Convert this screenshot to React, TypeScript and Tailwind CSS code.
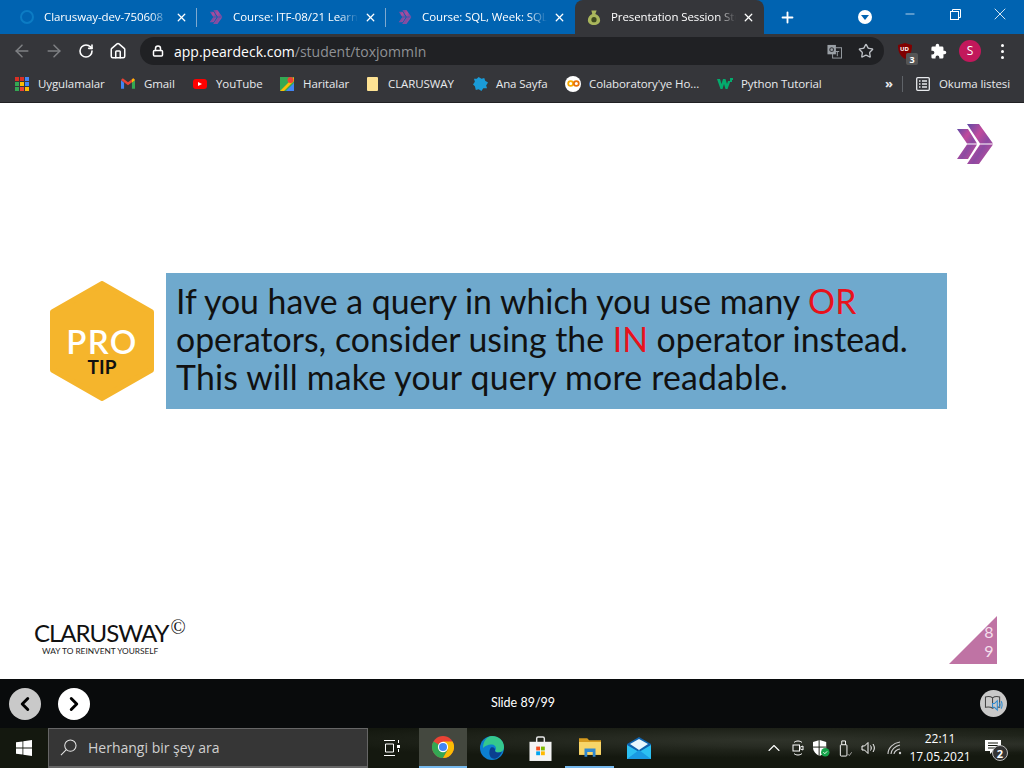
import { ArrowLeft, ArrowRight, ChevronLeft, ChevronRight, ChevronUp, House, Lock, Minus, Plus, RotateCw, Star, X } from 'lucide-react';

const uiFont = "font-['Open_Sans','Noto_Sans',sans-serif]";

function ChevronMark({ className }: { className?: string }) {
  return (
    <svg viewBox="0 0 36 40" className={className}>
      <defs>
        <linearGradient id="chev" x1="0" y1="0" x2="1" y2="1">
          <stop offset="0" stopColor="#5f4aa6" />
          <stop offset="0.35" stopColor="#c04a9c" />
          <stop offset="0.6" stopColor="#8c4aa2" />
          <stop offset="1" stopColor="#d24f97" />
        </linearGradient>
      </defs>
      <path d="M0 5h11l9 14.500H10z M10 20.500h10L11 35H0z" fill="url(#chev)" />
      <path d="M10 0h12l14 19.500H23z M23 20.500h13L22 40H10z" fill="url(#chev)" />
    </svg>
  );
}

function Tab({ title, icon, active, sep }: { title: string; icon: React.ReactNode; active?: boolean; sep?: boolean }) {
  return (
    <div className={`relative flex h-[34px] w-[189px] items-center pl-[11px] ${active ? 'rounded-t-lg bg-[#35363a]' : ''}`}>
      <div className="flex w-[16px] justify-center">{icon}</div>
      <span className="ml-[9px] w-[125px] overflow-hidden whitespace-nowrap text-[11.5px] tracking-[-0.1px] text-white [mask-image:linear-gradient(to_right,black_85%,transparent)]">
        {title}
      </span>
      <X size={13} strokeWidth={2.400} className="ml-[6px] text-white" />
      {sep && <div className="absolute right-0 top-[8px] h-[19px] w-px bg-[#7fa9cf]" />}
    </div>
  );
}

function Bookmark({ icon, label, left, width }: { icon: React.ReactNode; label: string; left: number; width: number }) {
  return (
    <div className="flex shrink-0 items-center" style={{ marginLeft: left }}>
      <div className="flex w-[16px] justify-center">{icon}</div>
      <span className="ml-[8px] whitespace-nowrap text-[11.5px] tracking-[-0.1px] text-[#e8eaed]" style={{ width }}>
        {label}
      </span>
    </div>
  );
}

function AppsIcon() {
  const colors = ['#d93025', '#d93025', '#4285f4', '#34a853', '#fbbc04', '#4285f4', '#34a853', '#ea4335', '#fbbc04'];
  return (
    <div className="grid h-[14px] w-[14px] grid-cols-3 gap-px">
      {colors.map((c, i) => (
        <div key={i} style={{ backgroundColor: c }} />
      ))}
    </div>
  );
}

function ChromeLogo() {
  return (
    <svg viewBox="0 0 24 24" className="h-[22px] w-[22px]">
      <circle cx="12" cy="12" r="12" fill="#ea4335" />
      <path d="M12 12 1.600 6A12 12 0 0 0 12 24l5.200-9z" fill="#34a853" />
      <path d="M12 6h10.400A12 12 0 0 1 12 24l5.200-9z" fill="#fbbc04" />
      <circle cx="12" cy="12" r="5.600" fill="#fff" />
      <circle cx="12" cy="12" r="4.400" fill="#4285f4" />
    </svg>
  );
}

function EdgeLogo() {
  return (
    <svg viewBox="0 0 24 24" className="h-[24px] w-[24px]">
      <circle cx="12" cy="12" r="12" fill="#0c7fd0" />
      <path d="M12 0c6.500 0 12 4.500 12 11 0 3.500-2.500 5.500-5.500 5.500-2 0-3.500-.7-3.500-1.500 2-2 1-6-3-6.500-3-.4-6.500 1-9 3.500C3 5 7 0 12 0z" fill="#35c88d" />
      <path d="M11 11.500c2.500-1 4.500.8 4 3.500.5 1 2 1.500 3.500 1.500 1.200 0 2.500-.3 3.500-1-1 2.500-3 5.500-6 7-2.500.8-5 0-6-2.500-1.200-3-.5-7 1-8.500z" fill="#0b3f8f" />
    </svg>
  );
}

function StoreLogo() {
  return (
    <svg viewBox="0 0 24 26" className="h-[25px] w-[23px]">
      <path d="M8 7V2.500A1.500 1.500 0 0 1 9.500 1h5A1.500 1.500 0 0 1 16 2.500V7" fill="none" stroke="#e8e8e8" strokeWidth="1.500" />
      <rect x="0.500" y="6" width="23" height="20" fill="#f4f4f4" />
      <rect x="7.500" y="11" width="4" height="4" fill="#f25022" />
      <rect x="12.500" y="11" width="4" height="4" fill="#7fba00" />
      <rect x="7.500" y="16" width="4" height="4" fill="#00a4ef" />
      <rect x="12.500" y="16" width="4" height="4" fill="#ffb900" />
    </svg>
  );
}

function ExplorerLogo() {
  return (
    <svg viewBox="0 0 24 20" className="h-[19px] w-[22px]">
      <path d="M0 0h9l2 2h13v16H0z" fill="#d69a1e" />
      <path d="M0 4h24v14H0z" fill="#f8d568" />
      <path d="M6 11h12v9h-3v-5H9v5H6z" fill="#2f88d0" />
    </svg>
  );
}

function MailLogo() {
  return (
    <svg viewBox="0 0 24 22" className="h-[22px] w-[24px]">
      <path d="M0 7 12 0l12 7v15H0z" fill="#0f62ad" />
      <path d="M0 8 12 15 24 8v14H0z" fill="#2cc0f2" />
      <path d="M0 22 12 13l12 9z" fill="#1a9ae2" />
      <path d="M3 7 12 2l9 5-9 6z" fill="#e8f6fd" />
    </svg>
  );
}

export default function App() {
  return (
    <div className={`flex h-[768px] w-[1024px] flex-col overflow-hidden bg-white ${uiFont}`}>
      {/* title bar */}
      <div className="flex h-[34px] shrink-0 items-start bg-[#0063b1] pl-[8px]">
        <Tab
          title="Clarusway-dev-750608"
          sep
          icon={<div className="h-[14px] w-[14px] rounded-full border-[2.500px] border-[#0c7cc4]" />}
        />
        <Tab title="Course: ITF-08/21 Learn" sep icon={<ChevronMark className="h-[14px] w-[14px] opacity-90" />} />
        <Tab title="Course: SQL, Week: SQL" icon={<ChevronMark className="h-[14px] w-[14px] opacity-90" />} />
        <Tab
          title="Presentation Session Stu"
          active
          icon={
            <svg viewBox="0 0 16 18" className="h-[17px] w-[14px]">
              <path d="M5 1h6L9.500 5c3.500 1 5.500 4 5.500 7 0 3.500-3 5.500-7 5.500S1 15.500 1 12c0-3 2-6 5-7z" fill="#a9b65c" />
              <circle cx="8" cy="11.500" r="3" fill="#3f4a1f" />
            </svg>
          }
        />
        <Plus size={17} strokeWidth={2.600} className="ml-[15px] mt-[9px] text-white" />
        <div className="ml-[62px] mt-[10px] flex h-[14px] w-[14px] items-center justify-center rounded-full bg-white">
          <div className="h-0 w-0 border-x-[4px] border-t-[5px] border-x-transparent border-t-[#0063b1]" />
        </div>
        <Minus size={14} strokeWidth={1.200} className="ml-[31px] mt-[7px] text-white" />
        <svg viewBox="0 0 11 11" className="ml-[33px] mt-[9px] h-[11px] w-[11px]" fill="none" stroke="#fff">
          <rect x="0.500" y="2.500" width="8" height="8" />
          <path d="M2.500 2.500v-2h8v8h-2" />
        </svg>
        <X size={20} strokeWidth={1} className="ml-[29px] mt-[4px] text-white" />
      </div>

      {/* toolbar */}
      <div className="flex h-[34px] shrink-0 items-center bg-[#35363a]">
        <ArrowLeft size={20} strokeWidth={1.800} className="ml-[12px] text-[#7f8184]" />
        <ArrowRight size={20} strokeWidth={1.800} className="ml-[12px] text-[#7f8184]" />
        <RotateCw size={16} strokeWidth={2.400} className="ml-[14px] text-white" />
        <House size={18} strokeWidth={2} className="ml-[15px] text-white" />
        <div className="ml-[13px] flex h-[28px] w-[744px] items-center rounded-full bg-[#202124]">
          <Lock size={12} strokeWidth={3} className="ml-[12px] text-white" />
          <span className="ml-[10px] text-[14px] text-white">
            app.peardeck.com<span className="text-[#8f9195]">/student/toxjommIn</span>
          </span>
          <svg viewBox="0 0 16 16" className="ml-auto mr-[16px] h-[15px] w-[15px]">
            <rect x="0.500" y="1" width="9" height="10" fill="#9aa0a6" />
            <rect x="6" y="4" width="9.500" height="11" fill="none" stroke="#9aa0a6" />
            <circle cx="5" cy="6" r="2" fill="none" stroke="#35363a" strokeWidth="1.200" />
            <path d="M9 8h4M11 8v5" stroke="#9aa0a6" />
          </svg>
          <Star size={16} strokeWidth={2} className="mr-[10px] text-[#bdc1c6]" />
        </div>
        <div className="relative ml-[13px] h-[16px] w-[16px]">
          <svg viewBox="0 0 16 16" className="h-[16px] w-[16px]">
            <path d="M1 2 8 0l7 2c0 7-2 11-7 14C3 13 1 9 1 2z" fill="#800000" />
          </svg>
          <span className="absolute left-[3px] top-[2px] text-[6px] font-bold leading-[9px] text-white">UD</span>
          <span className="absolute left-[9px] top-[10px] flex h-[12px] w-[12px] items-center justify-center rounded-[2px] bg-[#555] text-[9px] font-bold leading-none text-white">3</span>
        </div>
        <svg viewBox="0 0 24 24" className="ml-[17px] h-[17px] w-[17px]" fill="#fff">
          <path d="M20.500 11H19V7a2 2 0 0 0-2-2h-4V3.500a2.500 2.500 0 0 0-5 0V5H4a2 2 0 0 0-2 2v3.800h1.500a2.700 2.700 0 0 1 0 5.400H2V20a2 2 0 0 0 2 2h3.800v-1.500a2.700 2.700 0 0 1 5.400 0V22H17a2 2 0 0 0 2-2v-4h1.500a2.500 2.500 0 0 0 0-5z" />
        </svg>
        <div className="ml-[12px] flex h-[22px] w-[22px] items-center justify-center rounded-full bg-[#c2185b] text-[12px] text-white">S</div>
        <div className="ml-[20px] flex flex-col gap-[3px]">
          <div className="h-[3px] w-[3px] rounded-full bg-white" />
          <div className="h-[3px] w-[3px] rounded-full bg-white" />
          <div className="h-[3px] w-[3px] rounded-full bg-white" />
        </div>
      </div>

      {/* bookmarks */}
      <div className="flex h-[35px] shrink-0 items-center border-b border-[#202124] bg-[#35363a] pb-[3px]">
        <Bookmark left={14} width={67} label="Uygulamalar" icon={<AppsIcon />} />
        <Bookmark
          left={15}
          width={31}
          label="Gmail"
          icon={
            <svg viewBox="0 0 16 12" className="h-[11px] w-[14px]">
              <path d="M0 2v10h3.500V5z" fill="#4285f4" />
              <path d="M16 2v10h-3.500V5z" fill="#34a853" />
              <path d="M0 2l8 6 8-6-2-2-6 4.500L2 0z" fill="#ea4335" />
              <path d="M14 0l2 2-3.500 3V1.500z" fill="#fbbc04" />
            </svg>
          }
        />
        <Bookmark
          left={17}
          width={47}
          label="YouTube"
          icon={
            <div className="flex h-[10px] w-[14px] items-center justify-center rounded-[3px] bg-[#f00]">
              <div className="h-0 w-0 border-y-[2.500px] border-l-[4px] border-y-transparent border-l-white" />
            </div>
          }
        />
        <Bookmark
          left={16}
          width={45}
          label="Haritalar"
          icon={
            <svg viewBox="0 0 14 14" className="h-[14px] w-[14px]">
              <rect width="14" height="14" fill="#34a853" />
              <path d="M0 14 14 0v4L4 14z" fill="#fbbc04" />
              <path d="M6 14l8-8v8z" fill="#4285f4" />
              <circle cx="10.500" cy="3" r="3" fill="#ea4335" />
            </svg>
          }
        />
        <Bookmark
          left={16}
          width={68}
          label="CLARUSWAY"
          icon={<div className="h-[14px] w-[11px] rounded-[1px] bg-[#fde293]" />}
        />
        <Bookmark
          left={16}
          width={53}
          label="Ana Sayfa"
          icon={
            <svg viewBox="0 0 16 16" className="h-[15px] w-[15px]" fill="#1a9bd7">
              <path d="M6 1l3 2 3-1 1 3 3 2-2 3 1 3-4 0-2 3-3-2-3 1-1-4-2-2 2-3-1-3 3 0z" />
            </svg>
          }
        />
        <Bookmark
          left={16}
          width={111}
          label="Colaboratory'ye Ho..."
          icon={
            <div className="flex h-[16px] w-[16px] items-center justify-center rounded-full bg-white">
              <svg viewBox="0 0 16 10" className="h-[9px] w-[13px]" fill="none" stroke="#f9ab00" strokeWidth="2.200">
                <circle cx="4.500" cy="5" r="3" />
                <circle cx="11.500" cy="5" r="3" stroke="#e8710a" />
              </svg>
            </div>
          }
        />
        <Bookmark
          left={17}
          width={82}
          label="Python Tutorial"
          icon={
            <svg viewBox="0 0 16 11" className="h-[11px] w-[16px]" fill="#04aa6d">
              <path d="M0 1h3l1.500 5L6 1h2.500l1.500 5 1-3h2.500L10.500 11H8.500L7 6l-1.500 5H3.500z" />
              <path d="M13 0h3v2h-1v2h-2z" />
            </svg>
          }
        />
        <span className="ml-[62px] text-[13px] font-bold leading-none text-[#e8eaed]">»</span>
        <div className="ml-[9px] h-[16px] w-px bg-[#5f6368]" />
        <svg viewBox="0 0 14 14" className="ml-[13px] h-[14px] w-[14px]" fill="none" stroke="#e8eaed" strokeWidth="1.300">
          <rect x="0.700" y="0.700" width="12.600" height="12.600" rx="1" />
          <path d="M3 4h1.500M6 4h5M3 7h1.500M6 7h5M3 10h1.500M6 10h5" />
        </svg>
        <span className="ml-[9px] whitespace-nowrap text-[11.5px] tracking-[-0.1px] text-[#e8eaed]">Okuma listesi</span>
      </div>

      {/* slide */}
      <div className="flex h-[576px] shrink-0 flex-col bg-white">
        <div className="flex justify-end pr-[31px] pt-[21px]">
          <ChevronMark className="h-[40px] w-[36px]" />
        </div>
        <div className="ml-[49px] mt-[109px] flex items-center">
          <div className="relative h-[120px] w-[106px]">
            <svg viewBox="0 0 106 120" className="h-[120px] w-[106px]">
              <path
                d="M53 3 102 31v58L53 117 4 89V31z"
                fill="#f5b52c"
                stroke="#f5b52c"
                strokeWidth="6"
                strokeLinejoin="round"
              />
            </svg>
            <div className="absolute inset-0 flex flex-col items-center pt-[45px] font-['Lato',sans-serif]">
              <span className="text-[33px] font-semibold leading-[30px] tracking-[1.300px] text-white">PRO</span>
              <span className="mt-[3px] text-[19px] font-bold leading-[16px] text-[#111]">TIP</span>
            </div>
          </div>
          <div className="ml-[11px] h-[136px] w-[781px] bg-[#6fa9cd] pl-[10px] pt-[9px] font-['Lato',sans-serif] text-[33.8px] leading-[38px] text-[#111]">
            <p className="whitespace-nowrap">
              If you have a query in which you use many <span className="text-[#e8121c]">OR</span>
            </p>
            <p className="whitespace-nowrap">
              operators, consider using the <span className="text-[#e8121c]">IN</span> operator instead.
            </p>
            <p className="whitespace-nowrap tracking-[0.22px]">This will make your query more readable.</p>
          </div>
        </div>
        <div className="mt-auto flex items-end justify-between pb-[15px] pl-[34px] pr-[27px]">
          <div className="mb-[8px] font-['Lato',sans-serif] text-[#111]">
            <div className="flex items-start leading-none">
              <span className="text-[24px] leading-[24px] tracking-[-1px]">CLARUSWAY</span>
              <span className="-mt-[5px] ml-[2px] font-['Liberation_Serif',serif] text-[20px] leading-[22px]">©</span>
            </div>
            <div className="ml-[8px] mt-[1px] text-[8.3px] leading-[10px] text-[#222]">WAY TO REINVENT YOURSELF</div>
          </div>
          <div className="relative h-[48px] w-[48px] bg-[#bf73a4] [clip-path:polygon(100%_0,100%_100%,0_100%)]">
            <div className="absolute right-0 top-[6px] w-[16px] text-center font-['Lato',sans-serif] text-[16px] leading-[19px] text-[#f4dfec]">
              8<br />9
            </div>
          </div>
        </div>
      </div>

      {/* deck controls */}
      <div className="flex h-[49px] shrink-0 items-center bg-[#090b0c] pl-[9px] pr-[17px]">
        <div className="flex h-[32px] w-[32px] items-center justify-center rounded-full bg-[#c9c9c9]">
          <ChevronLeft size={22} strokeWidth={3.200} className="text-black" />
        </div>
        <div className="ml-[17px] flex h-[32px] w-[32px] items-center justify-center rounded-full bg-white">
          <ChevronRight size={22} strokeWidth={3.200} className="text-black" />
        </div>
        <span className="ml-[401px] font-['Lato',sans-serif] text-[12.5px] text-white">Slide 89/99</span>
        <div className="ml-auto flex h-[27px] w-[27px] items-center justify-center rounded-full bg-[#c9c9c9]">
          <svg viewBox="0 0 20 18" className="h-[17px] w-[19px]" fill="none">
            <path d="M9 3C7 1.500 4 1.500 1.500 2v11c2.500-.5 5.500-.5 7.500 1 2-1.500 5-1.500 7.500-1V2C14 1.500 11 1.500 9 3zM9 3v11" stroke="#444" strokeWidth="1.100" />
            <path d="M9 9h2l3-3v10l-3-3H9z" fill="#c9c9c9" stroke="#2e8bd0" strokeWidth="1.100" />
            <path d="M16 8c1 1.200 1 3.500 0 5M18 6.500c1.500 2 1.500 6 0 8" stroke="#2e8bd0" strokeWidth="1.100" />
          </svg>
        </div>
      </div>

      {/* taskbar */}
      <div className="flex h-[40px] shrink-0 items-center bg-[#14180f] bg-[radial-gradient(ellipse_at_75%_30%,#2f332a,transparent_45%),radial-gradient(ellipse_at_98%_40%,#2a2d26,transparent_25%)] font-['Open_Sans',sans-serif] text-white">
        <svg viewBox="0 0 16 16" className="ml-[16px] h-[16px] w-[16px]" fill="#fff">
          <path d="M0 2.300 6.500 1.400v6.200H0zM7.300 1.300 16 0v7.600H7.300zM0 8.400h6.500v6.200L0 13.700zM7.300 8.400H16V16l-8.700-1.300z" />
        </svg>
        <div className="ml-[16px] flex h-[40px] w-[320px] items-center border border-b-2 border-[#666] bg-[#363636]">
          <svg viewBox="0 0 18 18" className="ml-[11px] h-[17px] w-[17px]" fill="none" stroke="#e6e6e6" strokeWidth="1.100">
            <circle cx="11" cy="7" r="6" />
            <path d="M6.700 11.300 1 17" />
          </svg>
          <span className="ml-[11px] text-[14px] text-[#d0d0d0]">Herhangi bir şey ara</span>
        </div>
        <svg viewBox="0 0 16 16" className="ml-[16px] h-[16px] w-[16px]" fill="none" stroke="#fff" strokeWidth="1">
          <path d="M0 .5h11M0 15.500h11M1.500 4h8v8h-8zM14.500 0v3M14.500 9v3" />
          <rect x="13" y="5" width="3" height="3" fill="#fff" stroke="none" />
        </svg>
        <div className="ml-[19px] flex h-[40px] w-[48px] items-center justify-center border-b-2 border-[#76b9ed] bg-[#44483f]">
          <ChromeLogo />
        </div>
        <div className="flex h-[40px] w-[49px] items-center justify-center">
          <EdgeLogo />
        </div>
        <div className="flex h-[40px] w-[49px] items-center justify-center">
          <StoreLogo />
        </div>
        <div className="flex h-[40px] w-[49px] items-center justify-center border-b-2 border-[#76b9ed]">
          <ExplorerLogo />
        </div>
        <div className="flex h-[40px] w-[49px] items-center justify-center">
          <MailLogo />
        </div>
        <ChevronUp size={20} strokeWidth={1.300} className="ml-[101px] text-white" />
        <svg viewBox="0 0 12 16" className="ml-[8px] h-[16px] w-[12px]" fill="none" stroke="#fff" strokeWidth="1">
          <rect x="1" y="5" width="6.500" height="6" />
          <path d="M7.500 7.500 11 6v4L7.500 8.500M2 2.500C4 .5 8 .5 10 2.500M2 13.500c2 2 6 2 8 0" />
        </svg>
        <svg viewBox="0 0 18 18" className="ml-[9px] h-[17px] w-[17px]">
          <path d="M7 0 14 2v6c0 4-3 7-7 9-4-2-7-5-7-9V2z" fill="#fff" />
          <path d="M6.500 0v17M0 7.500h14" stroke="#14180f" strokeWidth="1" />
          <circle cx="13" cy="13" r="4.500" fill="#16a34a" />
          <path d="M11 13l1.500 1.500L15 12" fill="none" stroke="#fff" strokeWidth="1" />
        </svg>
        <svg viewBox="0 0 14 18" className="ml-[9px] h-[17px] w-[14px]" fill="none" stroke="#fff" strokeWidth="1">
          <rect x="1" y="5" width="7" height="12" rx="1" />
          <path d="M2.500 5V1h4v4" />
          <path d="M9 15l1.500 1.500L13 13" stroke="#aaa" />
        </svg>
        <svg viewBox="0 0 16 14" className="ml-[8px] h-[14px] w-[16px]" fill="none" stroke="#fff" strokeWidth="1">
          <path d="M1 5h2.500L7 1.500v11L3.500 9H1zM9.500 4.500c1 1.500 1 3.500 0 5M12 3c1.800 2.500 1.800 5.500 0 8" />
        </svg>
        <svg viewBox="0 0 16 14" className="ml-[10px] h-[14px] w-[16px]" fill="none" stroke="#cfcfcf" strokeWidth="1.100">
          <path d="M1 13c0-6 5-11 12-12M4 13c0-4 4-8 9-9M7 13c0-2 3-5 6-5" />
          <circle cx="13" cy="12" r="1.200" fill="#cfcfcf" stroke="none" />
        </svg>
        <div className="ml-[7px] flex w-[60px] flex-col items-center text-[12px] leading-[18px]">
          <span>22:11</span>
          <span className="whitespace-nowrap">17.05.2021</span>
        </div>
        <div className="relative ml-[15px] h-[16px] w-[17px]">
          <svg viewBox="0 0 16 15" className="h-[15px] w-[16px]">
            <path d="M0 0h16v11H8l-3 3v-3H0z" fill="#fff" />
            <path d="M3 3h10M3 5.500h10M3 8h7" stroke="#14180f" />
          </svg>
          <span className="absolute left-[7px] top-[5px] flex h-[16px] w-[16px] items-center justify-center rounded-full border border-[#bbb] bg-[#333] text-[11px] font-bold leading-none">2</span>
        </div>
      </div>
    </div>
  );
}
